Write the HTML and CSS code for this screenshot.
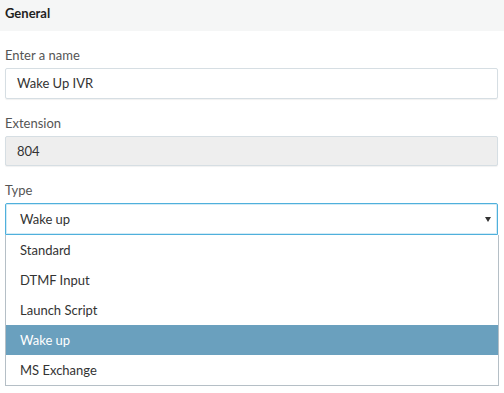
FILE: index.html
```html
<!DOCTYPE html>
<html lang="en">
<head>
  <meta charset="UTF-8" />
  <title>IVR settings</title>
  <link rel="stylesheet" href="styles.css">
</head>
<body>

<div class="section-head">General</div>

<div class="form">
  <div class="field">
    <label>Enter a name</label>
    <div class="input">Wake Up IVR</div>
  </div>

  <div class="field">
    <label>Extension</label>
    <div class="input disabled">804</div>
  </div>

  <div class="field">
    <label>Type</label>
    <div class="select">
      <span>Wake up</span>
      <span class="arrow"></span>
    </div>
    <ul class="options">
      <li>Standard</li>
      <li>DTMF Input</li>
      <li>Launch Script</li>
      <li class="active">Wake up</li>
      <li>MS Exchange</li>
    </ul>
  </div>
</div>

</body>
</html>
```

FILE: styles.css
```css
body {
  margin: 0;
  font-family: 'Lato', 'Liberation Sans', sans-serif;
  font-size: 13px;
  color: #333;
  background: #fff;
}
.section-head {
  height: 31px;
  line-height: 27px;
  padding-left: 5px;
  background-color: #f5f6f6;
  font-weight: bold;
  color: #1f1f1f;
}
.form {
  padding: 0 6px 0 5px;
}
.field {
  margin-top: 16px;
}
.field label {
  display: block;
  line-height: 16px;
  margin-bottom: 5px;
  color: #555;
}
.input {
  height: 29px;
  line-height: 29px;
  padding-left: 11px;
  border: 1px solid #d6dee3;
  border-radius: 2px;
  box-shadow: 0 1px 1px rgba(0,0,0,0.06);
  color: #333;
}
.input.disabled {
  height: 28px;
  line-height: 28px;
  background-color: #eeeeee;
}
.select {
  display: flex;
  justify-content: space-between;
  align-items: center;
  height: 30px;
  padding: 0 6px 0 14px;
  border: 1px solid #4fb0dc;
  border-radius: 2px 2px 0 0;
  box-shadow: inset 0 0 0 1px rgba(79,176,220,0.25);
  color: #333;
}
.arrow {
  width: 0;
  height: 0;
  border-left: 3px solid transparent;
  border-right: 3px solid transparent;
  border-top: 5px solid #333;
}
.options {
  list-style: none;
  margin: 0;
  padding: 0;
  border: 1px solid #b5bfc6;
  border-top: none;
  margin-right: -1px;
}
.options li {
  height: 30px;
  line-height: 30px;
  padding-left: 14px;
  color: #333;
}
.options li.active {
  background-color: #6aa0be;
  color: #fff;
}
```
